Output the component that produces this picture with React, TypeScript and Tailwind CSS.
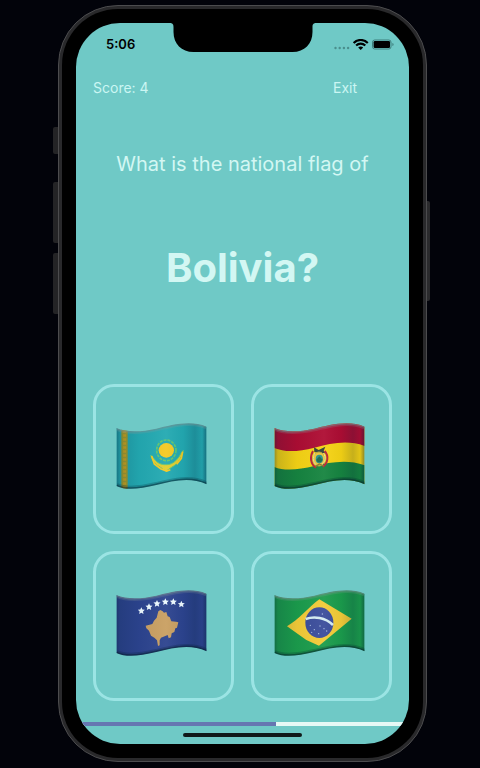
import React, { useId, useState } from "react";

type FlagName = "Kazakhstan" | "Bolivia" | "Kosovo" | "Brazil";

const CLOTH =
  "M0 15 C30 28 75 27 120 17 S220 -10 271 11 V184 C220 160 170 174 120 186 S30 203 0 189 Z";
const TOP_EDGE = "M0 15 C30 28 75 27 120 17 S220 -10 271 11";
const BOTTOM_EDGE = "M0 189 C30 203 75 197 120 186 S220 160 271 184";

function star(cx: number, cy: number, r: number) {
  const points: string[] = [];
  for (let i = 0; i < 10; i++) {
    const a = (Math.PI / 5) * i - Math.PI / 2;
    const d = i % 2 ? r * 0.48 : r;
    points.push(`${(cx + Math.cos(a) * d).toFixed(1)},${(cy + Math.sin(a) * d).toFixed(1)}`);
  }
  return points.join(" ");
}

function Kazakhstan() {
  return (
    <>
      <path d={CLOTH} fill="#23a9b1" />
      <rect x="15" y="0" width="19" height="200" fill="#a09b2d" />
      <path
        d="M25 22 V196"
        stroke="#c7a31f"
        strokeWidth="9"
        strokeDasharray="7 5"
        fill="none"
      />
      <ellipse cx="150" cy="82" rx="29" ry="31" fill="none" stroke="#62c66c" strokeWidth="5" strokeDasharray="9 3" />
      <ellipse cx="150" cy="82" rx="23" ry="22" fill="#f5c921" />
      <path
        d="M103 96 C107 116 119 126 131 132 L149 145 L164 134 C183 124 195 109 201 82 C194 89 190 99 187 103 C176 118 164 125 151 125 C134 126 123 120 114 108 Z"
        fill="#dfce2f"
        stroke="#5fc477"
        strokeWidth="3"
      />
      <path d="M106 99 L114 123 L133 137 L151 144 L162 140 M199 86 L195 106 L181 124" fill="none" stroke="#f5c921" strokeWidth="5" />
    </>
  );
}

function Bolivia() {
  return (
    <>
      <path d={CLOTH} fill="#f6d313" />
      <path d="M0 0 H271 V69 C220 50 170 61 120 74 S30 88 0 75 Z" fill="#ae0c32" />
      <path d="M0 132 C30 145 75 140 120 129 S220 107 271 127 V200 H0 Z" fill="#16843f" />
      <path d="M119 73 L133 81 L153 71 L148 84 L154 91 L135 89 L120 87 Z" fill="#314239" />
      <ellipse cx="134" cy="108" rx="18" ry="21" fill="#eac63a" stroke="#b7a93b" strokeWidth="3" />
      <path d="M116 84 C106 101 108 124 125 134 M151 84 C164 99 161 121 145 131" fill="none" stroke="#b82336" strokeWidth="6" />
      <path d="M122 90 C113 105 117 120 126 126 M148 91 C156 104 152 117 143 124" fill="none" stroke="#e9df9a" strokeWidth="3" />
      <ellipse cx="135" cy="108" rx="11" ry="13" fill="#29938b" />
      <path d="M126 110 L135 100 L145 110 L140 118 H130 Z" fill="#1c674e" />
      <path d="M123 131 L135 123 L148 129" fill="none" stroke="#8a782c" strokeWidth="4" />
    </>
  );
}

function Kosovo() {
  const stars = [
    [75, 63],
    [98, 51],
    [122, 41],
    [147, 36],
    [171, 36],
    [195, 43],
  ];
  return (
    <>
      <path d={CLOTH} fill="#2c438e" />
      {stars.map(([x, y]) => (
        <polygon key={x} points={star(x, y, 11)} fill="#eefaff" />
      ))}
      <path
        d="M126 64 L132 60 L139 64 L143 68 L150 66 L154 79 L160 81 L165 94 L179 95 L186 97 L182 113 L177 115 L174 126 L166 130 L164 142 L157 145 L154 135 L145 139 L134 143 L130 151 L130 166 L125 168 L122 151 L114 143 L104 137 L98 122 L90 115 L88 107 L108 102 L113 92 L121 83 Z"
        fill="#c99f61"
      />
    </>
  );
}

function Brazil() {
  return (
    <>
      <path d={CLOTH} fill="#1b9c4b" />
      <path d="M38 109 C72 90 104 51 135 28 L232 86 L134 167 L96 150 Z" fill="#f3cb37" />
      <ellipse cx="135" cy="98" rx="42" ry="46" fill="#3b4d9b" />
      <path d="M94 87 C119 78 153 82 176 105" fill="none" stroke="#d5ecf2" strokeWidth="8" />
      <g fill="#a9bde3">
        <circle cx="108" cy="106" r="2" />
        <circle cx="120" cy="119" r="2" />
        <circle cx="112" cy="127" r="2" />
        <circle cx="133" cy="131" r="2" />
        <circle cx="149" cy="116" r="2" />
        <circle cx="157" cy="123" r="2" />
        <circle cx="137" cy="108" r="2" />
        <circle cx="144" cy="72" r="2" />
      </g>
    </>
  );
}

const DESIGNS: Record<FlagName, () => React.JSX.Element> = { Kazakhstan, Bolivia, Kosovo, Brazil };

function Flag({ name }: { name: FlagName }) {
  const id = useId();
  const Design = DESIGNS[name];
  return (
    <svg viewBox="0 0 271 198" className="h-[66px] w-[91px]" aria-hidden="true">
      <defs>
        <clipPath id={`${id}-cloth`}>
          <path d={CLOTH} />
        </clipPath>
        <linearGradient id={`${id}-fold`} x1="0" x2="1" y1="0" y2="0">
          <stop offset="0" stopColor="#06213b" stopOpacity="0.4" />
          <stop offset="0.04" stopColor="#06213b" stopOpacity="0.18" />
          <stop offset="0.25" stopColor="#06213b" stopOpacity="0.04" />
          <stop offset="0.55" stopColor="#ffffff" stopOpacity="0.05" />
          <stop offset="0.74" stopColor="#06213b" stopOpacity="0.04" />
          <stop offset="0.87" stopColor="#06213b" stopOpacity="0.2" />
          <stop offset="0.95" stopColor="#06213b" stopOpacity="0.08" />
          <stop offset="1" stopColor="#06213b" stopOpacity="0.45" />
        </linearGradient>
      </defs>
      <g clipPath={`url(#${id}-cloth)`}>
        <Design />
        <path d={CLOTH} fill={`url(#${id}-fold)`} />
        <path d={TOP_EDGE} fill="none" stroke="#8b9c9d" strokeOpacity="0.22" strokeWidth="16" />
        <path d={TOP_EDGE} fill="none" stroke="#718b8e" strokeOpacity="0.5" strokeWidth="7" />
        <path d={BOTTOM_EDGE} fill="none" stroke="#061f2c" strokeOpacity="0.22" strokeWidth="18" />
        <path d={BOTTOM_EDGE} fill="none" stroke="#061f2c" strokeOpacity="0.45" strokeWidth="9" />
      </g>
    </svg>
  );
}

function StatusBar() {
  return (
    <div className="flex h-11 items-center justify-between pr-[15px] pl-[30px] text-black">
      <time className="text-[13px] font-semibold">5:06</time>
      <svg viewBox="0 0 60 12" className="h-3 w-[60px]" role="img" aria-label="Wi-Fi connected, battery full">
        <g fill="#4a8f8d">
          <circle cx="1.5" cy="9" r="1.2" />
          <circle cx="5.7" cy="9" r="1.2" />
          <circle cx="9.9" cy="9" r="1.2" />
          <circle cx="14.1" cy="9" r="1.2" />
        </g>
        <g fill="none" stroke="#000" strokeWidth="2.1">
          <path d="M19.6 4 C23.6 -0.1 29.8 -0.1 33.8 4" />
          <path d="M22.1 6.6 C24.8 3.9 28.6 3.9 31.3 6.6" />
        </g>
        <path d="M24.2 8.6 C25.6 7.2 27.8 7.2 29.2 8.6 L26.7 11 Z" />
        <rect x="38.5" y="1" width="18.5" height="9" rx="2.2" fill="none" stroke="#3f7f7d" />
        <rect x="39.6" y="2" width="16.4" height="7" rx="1.3" />
        <path d="M58.4 4 C60 4.5 60 6.5 58.4 7.1 Z" fill="#3f7f7d" />
      </svg>
    </div>
  );
}

function PhoneFrame({ children }: { children: React.ReactNode }) {
  return (
    <div className="relative">
      <div className="absolute top-[122px] -left-[5px] h-[27px] w-[6px] rounded-l-xs bg-[#242426]" />
      <div className="absolute top-[177px] -left-[5px] h-[61px] w-[6px] rounded-l-xs bg-[#242426]" />
      <div className="absolute top-[248px] -left-[5px] h-[61px] w-[6px] rounded-l-xs bg-[#242426]" />
      <div className="absolute top-[196px] -right-[3px] h-[100px] w-[4px] rounded-r-xs bg-[#2b2b2d]" />
      <div className="relative w-[369px] rounded-[60px] border border-[#4c4c4e] bg-[#29292b] p-[3px]">
        <div className="rounded-[56px] bg-black p-[14px]">
          <div className="relative flex min-h-[721px] flex-col overflow-hidden rounded-[44px] bg-[#6fc9c6]">
            <svg
              viewBox="0 0 147 29"
              className="absolute top-0 left-1/2 h-[29px] w-[147px] -translate-x-1/2"
              aria-hidden="true"
            >
              <path d="M0 0 C3 0 4 1 4 4 V9 C4 21 12 29 24 29 H123 C135 29 143 21 143 9 V4 C143 1 144 0 147 0 Z" />
            </svg>
            {children}
          </div>
        </div>
      </div>
    </div>
  );
}

const OPTIONS: FlagName[] = ["Kazakhstan", "Bolivia", "Kosovo", "Brazil"];
const ANSWER: FlagName = "Bolivia";

export default function App() {
  const [score, setScore] = useState(4);
  const timeLeft = 60;

  return (
    <main className="flex min-h-screen justify-center bg-[#02030a] pt-[5px] pb-[6px] pl-[5px] font-['Inter','Liberation_Sans',sans-serif]">
      <PhoneFrame>
        <StatusBar />
        <header className="mt-[11px] flex items-center justify-between pr-[52px] pl-[17px] text-sm leading-5 text-[#cbf6f3]">
          <p>Score: {score}</p>
          <button type="button">Exit</button>
        </header>
        <h1 className="mt-[51px] text-center text-[#d3f7f3]">
          <span className="block text-xl leading-[30px]">What is the national flag of</span>
          <span className="mt-16 block text-[40px] leading-[50px] font-bold">{ANSWER}?</span>
        </h1>
        <div className="mt-auto grid grid-cols-2 gap-[17px] px-[17px] pb-[21px]">
          {OPTIONS.map((name) => (
            <button
              key={name}
              type="button"
              aria-label={`Flag of ${name}`}
              onClick={() => name === ANSWER && setScore(score + 1)}
              className="flex h-[150px] items-center justify-center rounded-[21px] border-3 border-[#9be4e4] pr-1 pb-1.5"
            >
              <Flag name={name} />
            </button>
          ))}
        </div>
        <div
          role="progressbar"
          aria-label="Time left"
          aria-valuenow={timeLeft}
          className="h-[4px] bg-[#e6f8f5]"
        >
          <div className="h-full bg-[#6676b1]" style={{ width: `${timeLeft}%` }} />
        </div>
        <div className="mx-auto mt-[7px] mb-[7px] h-[4px] w-[119px] rounded-full bg-[#10191a]" />
      </PhoneFrame>
    </main>
  );
}
